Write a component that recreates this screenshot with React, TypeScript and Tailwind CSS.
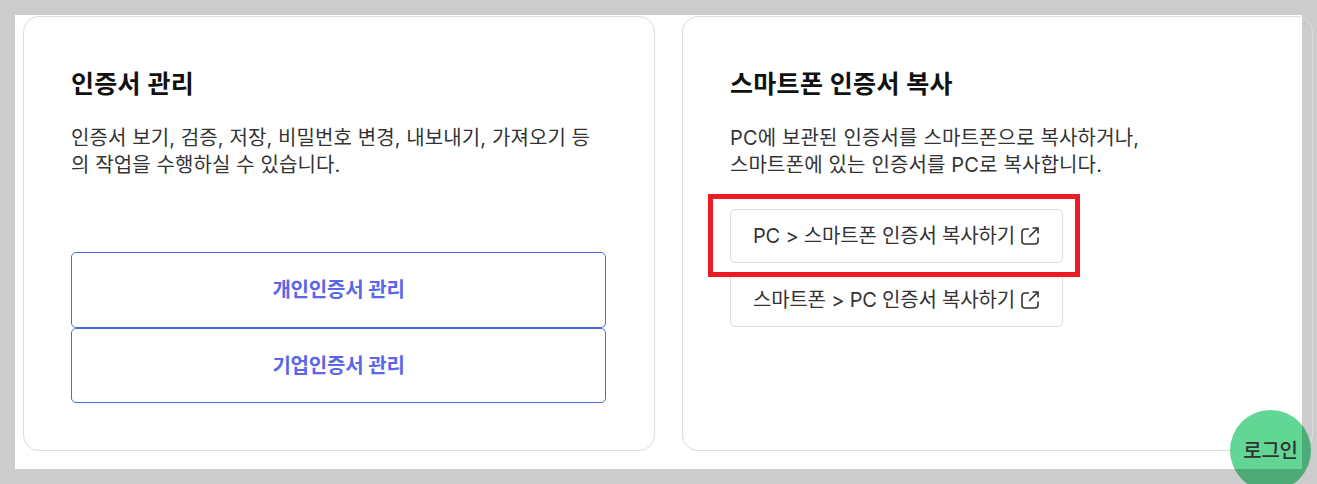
const font = "font-['Inter','Noto_Sans_CJK_KR','Noto_Sans',sans-serif]";

function ExternalIcon() {
  return (
    <svg width="20" height="20" viewBox="0 0 20 20" fill="none" stroke="#333" strokeWidth="1.6" className="shrink-0">
      <path d="M9 3H5a3 3 0 0 0-3 3v9a3 3 0 0 0 3 3h10a3 3 0 0 0 3-3v-3.500" />
      <path d="M12.500 2H18v5.500M18 2L9 11" />
    </svg>
  );
}

function CopyButton({ label, marked }: { label: string; marked?: boolean }) {
  return (
    <div className="relative w-[333px]">
      <button className="w-full h-[54px] px-[22px] flex items-center gap-[5px] border border-[#dddddd] rounded-[5px] bg-white text-[20px] tracking-[-0.2px] text-[#333333] whitespace-nowrap">
        {label}
        <ExternalIcon />
      </button>
      {marked && <div className="absolute z-10 -left-[22px] -top-[15px] w-[372px] h-[83px] border-[5px] border-[#ed1c24]" />}
    </div>
  );
}

export default function App() {
  return (
    <div className={`relative h-[484px] w-[1317px] overflow-hidden bg-[#cccccc] pl-[15px] pt-[15px] ${font}`}>
      <div className="w-[1287px] h-[454px] bg-white pl-[8px] pt-px">
        <div className="flex gap-[27px] w-[1290px]">
          <section className="w-[632px] h-[435px] border border-[#dddddd] rounded-[16px] pl-[47px] pr-[48px] pt-[49px]">
            <h2 className="text-[25px] leading-[36px] font-semibold tracking-[0.3px] text-[#111111]">인증서 관리</h2>
            <p className="mt-[23px] text-[20px] leading-[27px] tracking-[0.1px] text-[#333333]">
              인증서 보기, 검증, 저장, 비밀번호 변경, 내보내기, 가져오기 등의 작업을 수행하실 수 있습니다.
            </p>
            <div className="mt-[73px] flex flex-col">
              <button className="h-[76px] border border-[#4a69e6] rounded-[5px] text-[20px] font-semibold tracking-[-0.2px] text-[#5a67e8]">개인인증서 관리</button>
              <button className="h-[75px] border border-[#4a69e6] rounded-[5px] text-[20px] font-semibold tracking-[-0.2px] text-[#5a67e8]">기업인증서 관리</button>
            </div>
          </section>
          <section className="w-[631px] h-[435px] border border-[#dddddd] rounded-[16px] pl-[47px] pt-[49px]">
            <h2 className="text-[25px] leading-[36px] font-semibold tracking-[0.3px] text-[#111111]">스마트폰 인증서 복사</h2>
            <p className="mt-[23px] text-[20px] leading-[27px] tracking-[0.15px] text-[#333333]">
              PC에 보관된 인증서를 스마트폰으로 복사하거나,
              <br />
              스마트폰에 있는 인증서를 PC로 복사합니다.
            </p>
            <div className="mt-[30px] flex flex-col gap-[10px]">
              <CopyButton label="PC > 스마트폰 인증서 복사하기" marked />
              <CopyButton label="스마트폰 > PC 인증서 복사하기" />
            </div>
          </section>
        </div>
      </div>
      <div className="absolute left-[1230px] top-[410px] w-[81px] h-[81px] rounded-full overflow-hidden bg-[#62d695] flex items-center justify-center text-[20px] font-medium tracking-[-0.2px] text-[#333333]">
        로그인
        <div className="absolute left-[72px] top-0 w-[9px] h-[81px] bg-black/20" />
        <div className="absolute left-0 top-[59px] w-[72px] h-[22px] bg-black/20" />
      </div>
    </div>
  );
}
